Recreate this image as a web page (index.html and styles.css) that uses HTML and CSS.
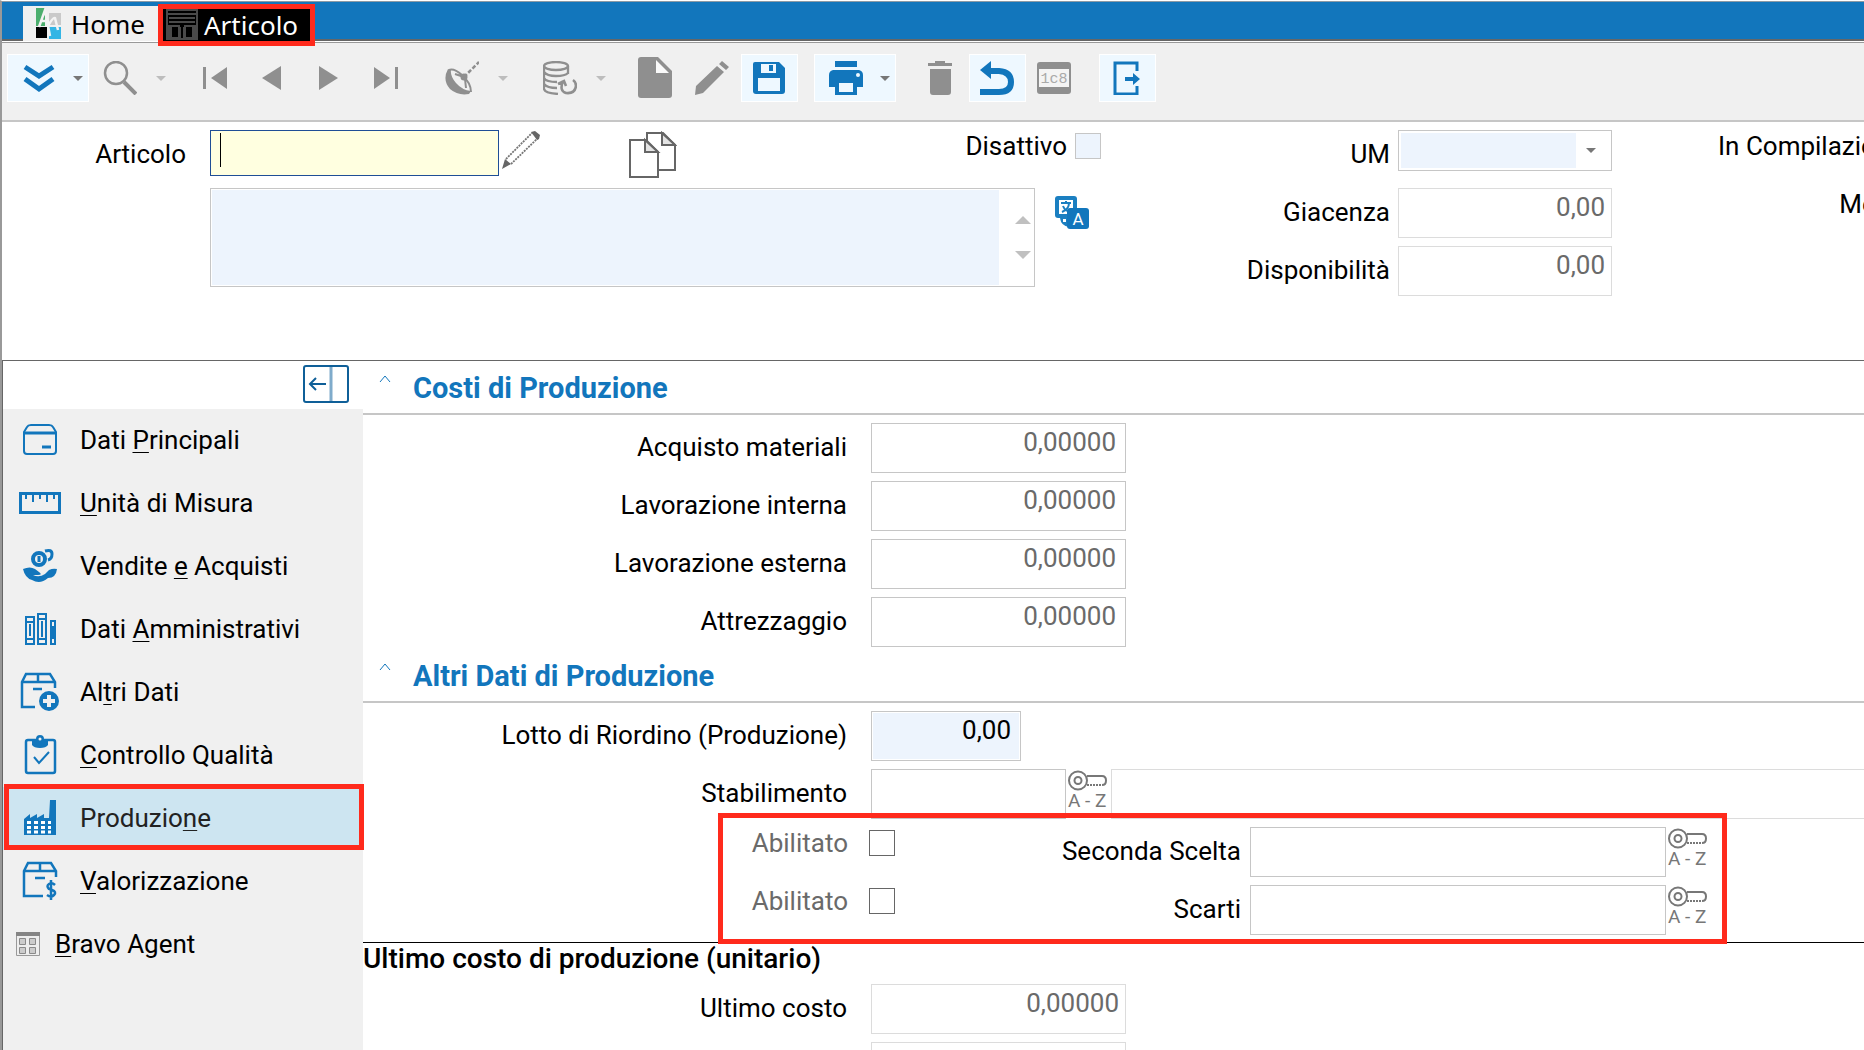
FILE: index.html
```html
<!DOCTYPE html>
<html lang="it">
<head>
<meta charset="utf-8">
<title>Articolo</title>
<link rel="stylesheet" href="styles.css">
</head>
<body>
<svg class="defs" aria-hidden="true">
  <symbol id="caret" viewBox="0 0 10 5"><path fill="currentColor" d="M0 0h10L5 5z"/></symbol>
  <symbol id="key" viewBox="0 0 39 21">
    <g fill="none" stroke="currentColor" stroke-width="2"><circle cx="10" cy="10.500" r="9"/><circle cx="10" cy="10.500" r="3.500"/><path d="M19 6h15q4 0 4 4.500T34 15"/><path stroke-dasharray="2 1" d="M19 15h15"/></g>
  </symbol>
</svg>
<div class="app">
  <header class="tabs">
    <a class="tab" href="#home">
      <svg class="tab-logo" viewBox="0 0 25 32"><path fill="#4cae6d" d="M0 0h9v18H0z"/><path fill="#c9c9c9" d="M13 5h12v12H13z"/><path d="M0 19h11v11H0z"/><path fill="#34b5e5" d="M13 19h12v12H13z"/><path fill="none" stroke="#f3f3f3" stroke-width="2.500" d="M3 19L9 2l5 26M12 18q5-9 7-8l3 12M5 13h8"/></svg>
      Home
    </a>
    <a class="tab tab-active" href="#articolo" aria-current="page">
      <svg class="tab-form" viewBox="0 0 32 32"><g fill="none" stroke="#4a4a4a" stroke-width="2"><path d="M1 1h30v29H1zM1 5h30M3 9h26M3 13h26M3 17h10v12H3zM19 17h10v12H19z"/></g><path fill="#4a4a4a" d="M2 17h4v12H2zM13 18h2v11h-2zM17 18h2v11h-2zM26 17h4v12h-4z"/></svg>
      Articolo
    </a>
  </header>

  <div class="toolbar" role="toolbar" aria-label="Comandi">
    <div class="tools">
      <button class="tool tool-wide tool-on" aria-label="Azioni"><svg class="i34" viewBox="0 0 34 34"><g fill="none" stroke="currentColor" stroke-width="5"><path d="M3 6l14 9 14-9M3 18l14 10 14-10"/></g></svg><svg class="caret"><use href="#caret"/></svg></button>
      <button class="tool tool-wide" aria-label="Cerca"><svg class="i34" viewBox="0 0 34 34"><g fill="none" stroke="currentColor"><circle cx="13" cy="12" r="11" stroke-width="2.500"/><path stroke-width="4" d="M21 21l12 12"/></g></svg><svg class="caret"><use href="#caret"/></svg></button>
    </div>
    <div class="tools">
      <button class="tool" aria-label="Primo"><svg class="i24" viewBox="0 0 24 24"><path fill="currentColor" d="M0 1h3v22H0zM24 1v22L8 12z"/></svg></button>
      <button class="tool" aria-label="Precedente"><svg class="i24" viewBox="0 0 24 24"><path fill="currentColor" d="M21 0v24L2 12z"/></svg></button>
      <button class="tool" aria-label="Successivo"><svg class="i24" viewBox="0 0 24 24"><path fill="currentColor" d="M2 0v24l19-12z"/></svg></button>
      <button class="tool" aria-label="Ultimo"><svg class="i24" viewBox="0 0 24 24"><path fill="currentColor" d="M21 1h3v22h-3zM0 1v22l16-11z"/></svg></button>
    </div>
    <div class="tools">
      <button class="tool tool-wide" aria-label="Ricezione"><svg class="i34" viewBox="0 0 34 34"><path fill="currentColor" d="M3 8q-6 11 2 20 8 7 19 5l2-3q-9-1-15-8T6 9z"/><path fill="none" stroke="currentColor" stroke-width="2" d="M4 9q5-2 13 5 9 8 9 17M10 13l9 3M20 18l1 9"/><circle cx="19" cy="16" r="3.500" fill="currentColor"/><path fill="none" stroke="currentColor" stroke-width="2.500" stroke-dasharray="4 2" d="M19 16L34 1"/></svg><svg class="caret"><use href="#caret"/></svg></button>
    </div>
    <div class="tools">
      <button class="tool tool-wide" aria-label="Aggiorna archivio"><svg class="i34" viewBox="0 0 34 34"><g fill="none" stroke="currentColor" stroke-width="2.300"><ellipse cx="13" cy="5" rx="12" ry="4"/><path d="M1 5v23q1 4 14 5M25 5v8M1 11q3 4 12 4t12-3M1 17q2 4 13 4M1 23q3 4 13 4"/><path stroke-width="2.600" d="M20 20q-4 10 3 12 9 1 10-7 0-4-3-6M15 23l6-3 2 5"/></g></svg><svg class="caret"><use href="#caret"/></svg></button>
    </div>
    <div class="tools">
      <button class="tool" aria-label="Nuovo"><svg class="i42" viewBox="0 0 42 42"><path fill="currentColor" d="M7 0h17l14 14v24q0 3-3 3H7q-3 0-3-3V3q0-3 3-3z"/><path fill="#fafafa" d="M22 3l13 13H22z"/></svg></button>
      <button class="tool" aria-label="Modifica"><svg class="i34" viewBox="0 0 34 34"><path fill="currentColor" d="M0 34l1-9L22 5l7 6L8 32zM24 3l3-3 7 6-3 3z"/></svg></button>
      <button class="tool tool-on" aria-label="Salva"><svg class="i34" viewBox="0 0 34 34"><path fill="currentColor" d="M3 1h24l6 6v23q0 3-3 3H4q-3 0-3-3V3q0-2 2-2z"/><path fill="#eef8ff" d="M9 3h15v9H9zM6 17h22v13H6z"/><path fill="currentColor" d="M17 4h4v6h-4z"/></svg></button>
    </div>
    <div class="tools">
      <button class="tool tool-wide tool-on" aria-label="Stampa"><svg class="i34" viewBox="0 0 34 34"><path fill="currentColor" d="M6 0h22v6H6zM4 9h26q4 1 4 5v12h-6v8H6v-8H0V14q0-4 4-5z"/><path fill="#eef8ff" d="M10 22h14v9H10z"/><circle cx="29" cy="14" r="2" fill="#eef8ff"/></svg><svg class="caret"><use href="#caret"/></svg></button>
    </div>
    <div class="tools">
      <button class="tool" aria-label="Elimina"><svg class="i34" viewBox="0 0 34 34"><path fill="currentColor" d="M12 0h10v2h7v3H5V2h7zM7 8h21v23q0 3-3 3H10q-3 0-3-3z"/></svg></button>
      <button class="tool tool-on" aria-label="Annulla"><svg class="i34" viewBox="0 0 34 34"><path fill="none" stroke="currentColor" stroke-width="6" d="M8 10h11q12 1 12 11T19 31H0"/><path fill="currentColor" d="M0 9L11 0v18z"/></svg></button>
      <button class="tool" aria-label="Log"><svg class="i34" viewBox="0 0 34 34"><rect y="1" width="34" height="32" rx="3" fill="currentColor"/><path fill="#f4f4f4" d="M2 8h30v18H2z"/><text class="log-text" x="17" y="22">1c8</text></svg></button>
    </div>
    <div class="tools">
      <button class="tool tool-on" aria-label="Esci"><svg class="i34" viewBox="0 0 34 34"><path fill="none" stroke="currentColor" stroke-width="3" d="M27 10V2H5v31h22v-8"/><path fill="currentColor" d="M15 16h8v-4l7 6-7 6v-4h-8z"/></svg></button>
    </div>
  </div>

  <form class="head">
    <div class="head-code">
      <label class="head-label" for="articolo">Articolo</label>
      <div class="code-line">
        <span class="code-box"><input class="code-input" id="articolo" type="text"></span>
        <button class="plain plain-edit" type="button" aria-label="Modifica codice"><svg class="i40" viewBox="0 0 40 40"><g fill="none" stroke="#777" stroke-width="1.800" stroke-dasharray="2 1"><path d="M5 29L31 3M10 34L37 8"/></g><path fill="#666" d="M1 39l3-10 6 5zM30 2l4-1 5 4-1 4-2 1z"/></svg></button>
        <button class="plain plain-copy" type="button" aria-label="Duplica"><svg class="i48" viewBox="0 0 48 48"><g fill="#fff" stroke="#666" stroke-width="2"><path d="M18 2h16l12 12v25H18z"/><path fill="#e4e4e4" d="M33 2v12h13z"/><path d="M1 9h16l12 12v25H1z"/><path fill="#e4e4e4" d="M16 9v12h13z"/></g></svg></button>
        <span class="off-field"><label for="disattivo">Disattivo</label><input class="off-box" id="disattivo" type="checkbox"></span>
      </div>
      <div class="desc-line">
        <div class="desc-box">
          <textarea class="desc" aria-label="Descrizione"></textarea>
          <span class="spin"><svg viewBox="0 0 16 8"><path d="M0 8h16L8 0z"/></svg><svg viewBox="0 0 16 8"><path d="M0 0h16L8 8z"/></svg></span>
        </div>
        <button class="plain" type="button" aria-label="Traduzioni"><svg class="i34" viewBox="0 0 34 34"><rect width="22" height="22" rx="3" fill="#1b7fc1"/><path fill="#fff" d="M4 4h14v14H4z"/><path fill="none" stroke="#1b7fc1" stroke-width="2" d="M6 7h10M11 5v2M7 16q7-3 7-9M8 10q2 5 7 6"/><path fill="#1b7fc1" d="M5 22q1 8 9 9v-9z"/><path fill="#fff" d="M8 23h3v3H8z"/><rect x="12" y="12" width="22" height="21" rx="3" fill="#1276bc"/><text class="tr-text" x="23" y="29">A</text></svg></button>
      </div>
    </div>
    <div class="head-stock">
      <label for="um">UM</label>
      <span class="um-box"><select class="um" id="um"><option></option></select><svg class="caret um-caret"><use href="#caret"/></svg></span>
      <label for="giacenza">Giacenza</label>
      <input class="field field-dim" id="giacenza" type="text" value="0,00" readonly>
      <label for="disponibilita">Disponibilità</label>
      <input class="field field-dim" id="disponibilita" type="text" value="0,00" readonly>
    </div>
    <div class="head-more">
      <label for="compilazione">In Compilazione</label><input id="compilazione" type="checkbox">
      <label for="mese">Mese</label><input id="mese" type="checkbox">
    </div>
  </form>

  <div class="body">
    <aside class="side">
      <div class="side-top"><button class="plain" aria-label="Comprimi menu"><svg class="i-toggle" viewBox="0 0 46 38"><g fill="none" stroke="#0f5f98"><rect x="1" y="1" width="44" height="36" rx="2" stroke-width="2"/><path stroke="#7fabcb" stroke-width="3" d="M28 2v34"/><path stroke-width="2" d="M23 19H8M13 13l-6 6 6 6"/></g></svg></button></div>
      <nav class="nav">
        <a class="nav-item" href="#principali"><svg class="i40" viewBox="0 0 40 40"><g fill="none" stroke="#1276bc" stroke-width="2"><path d="M4 12l3-5q1-2 4-2h18q3 0 4 2l3 5v19q0 3-3 3H7q-3 0-3-3z"/><path stroke-width="3" d="M4 13h32"/><path stroke-width="3" d="M22 27h9"/></g></svg><span>Dati <u>P</u>rincipali</span></a>
        <a class="nav-item" href="#misura"><svg class="i42" viewBox="0 0 42 40"><g fill="none" stroke="#1276bc"><path stroke-width="3" d="M1.500 10.500h39v19h-39z"/><path stroke-width="2" d="M7 12v4M14 12v7M21 12v4M28 12v7M35 12v4"/></g></svg><span><u>U</u>nità di Misura</span></a>
        <a class="nav-item" href="#vendite"><svg class="i40" viewBox="0 0 40 40"><g fill="none" stroke="#1276bc"><ellipse cx="19" cy="13" rx="6" ry="6" stroke-width="4"/><path stroke-width="3" d="M19 10v6M25 5q7-2 7 3t-4 6"/></g><path fill="#1276bc" d="M3 23q7-3 12 0l4 3q4 3-1 3h-5q6 3 12-1l4-4q4-2 8-1-1 9-9 9-8 7-16 2-7-2-9-11z"/></svg><span>Vendite <u>e</u> Acquisti</span></a>
        <a class="nav-item" href="#amministrativi"><svg class="i40" viewBox="0 0 40 40"><g fill="none" stroke="#1276bc" stroke-width="2"><path d="M6 8h8v27H6zM18 5h8v30h-8zM6 13h8M6 30h8M18 10h8M18 30h8M10 15v12M22 12v16"/><path d="M31 12h4v23h-4z"/></g><path fill="#1276bc" d="M30 17h6v13h-6z"/></svg><span>Dati <u>A</u>mministrativi</span></a>
        <a class="nav-item" href="#altri"><svg class="i40" viewBox="0 0 40 40"><g fill="none" stroke="#1276bc" stroke-width="2.500"><path d="M15 35H2V10l4-8h24l5 8v6M2 10h33M18 2v8M13 17h9"/></g><circle cx="29" cy="29" r="10" fill="#1276bc"/><path stroke="#f0f0f0" stroke-width="4" d="M29 23v12M23 29h12"/></svg><span>Al<u>t</u>ri Dati</span></a>
        <a class="nav-item" href="#qualita"><svg class="i40" viewBox="0 0 40 40"><g fill="none" stroke="#1276bc" stroke-width="2.500"><rect x="6" y="5" width="29" height="33" rx="2"/><path stroke-width="2" d="M14 22l5 6 10-11"/></g><path fill="#1276bc" d="M12 4h4q0-4 4-4t4 4h4v6q-2 3-8 3t-8-3z"/><circle cx="20" cy="4" r="1.500" fill="#f0f0f0"/></svg><span><u>C</u>ontrollo Qualità</span></a>
        <a class="nav-item nav-active" href="#produzione" aria-current="true"><svg class="i40" viewBox="0 0 40 40"><path fill="#1276bc" d="M4 37V21l6-5v4l7-4v4l7-4v4h5l1-18h6v35z"/><path stroke="#fff" stroke-width="3" stroke-dasharray="4 3" d="M7 24.500h24M7 29.500h24M7 34h24"/></svg><span>Produzio<u>n</u>e</span></a>
        <a class="nav-item" href="#valorizzazione"><svg class="i40" viewBox="0 0 40 40"><g fill="none" stroke="#1276bc" stroke-width="2.500"><path d="M23 35H4V10l4-8h23l5 8v6M4 10h32M20 2v8M15 17h10"/><path d="M35 24q-3-3-6-1t0 5l3 1q5 2 2 5t-7 0M31 19v20"/></g></svg><span><u>V</u>alorizzazione</span></a>
        <a class="nav-item nav-small" href="#agent"><svg class="i24" viewBox="0 0 24 24"><path fill="#eee" stroke="#999" d="M.5.500h23v23H.5z"/><path fill="#858585" d="M0 0h24v4H0z"/><g fill="#ccc" stroke="#8a8a8a"><path d="M3.500 6.500h6v6h-6zM13.500 6.500h6v6h-6zM3.500 15.500h6v6h-6zM13.500 15.500h6v6h-6z"/></g></svg><span><u>B</u>ravo Agent</span></a>
      </nav>
    </aside>

    <main class="main">
      <section>
        <h2 class="title"><svg class="chev" viewBox="0 0 12 8"><path d="M1 7l5-6 5 6"/></svg>Costi di Produzione</h2>
        <div class="rows">
          <div class="row"><label for="acq">Acquisto materiali</label><input class="field field-cost" id="acq" type="text" value="0,00000" readonly></div>
          <div class="row"><label for="lint">Lavorazione interna</label><input class="field field-cost" id="lint" type="text" value="0,00000" readonly></div>
          <div class="row"><label for="lest">Lavorazione esterna</label><input class="field field-cost" id="lest" type="text" value="0,00000" readonly></div>
          <div class="row"><label for="attr">Attrezzaggio</label><input class="field field-cost" id="attr" type="text" value="0,00000" readonly></div>
        </div>
      </section>
      <section>
        <h2 class="title"><svg class="chev" viewBox="0 0 12 8"><path d="M1 7l5-6 5 6"/></svg>Altri Dati di Produzione</h2>
        <div class="rows">
          <div class="row"><label for="lotto">Lotto di Riordino (Produzione)</label><input class="field field-lot" id="lotto" type="text" value="0,00"></div>
          <div class="row row-plant"><label for="stab">Stabilimento</label><input class="field" id="stab" type="text"><button class="lookup" aria-label="Cerca stabilimento"><svg><use href="#key"/></svg>A - Z</button><input class="field field-dim field-rest" type="text" aria-label="Descrizione stabilimento" readonly></div>
          <div class="marked">
            <div class="row row-pair"><label class="muted" for="ab1">Abilitato</label><input class="check" id="ab1" type="checkbox"><label class="near" for="seconda">Seconda Scelta</label><input class="field" id="seconda" type="text"><button class="lookup" aria-label="Cerca seconda scelta"><svg><use href="#key"/></svg>A - Z</button></div>
            <div class="row row-pair"><label class="muted" for="ab2">Abilitato</label><input class="check" id="ab2" type="checkbox"><label class="near" for="scarti">Scarti</label><input class="field" id="scarti" type="text"><button class="lookup" aria-label="Cerca scarti"><svg><use href="#key"/></svg>A - Z</button></div>
          </div>
        </div>
      </section>
      <section class="last">
        <h3 class="subtitle">Ultimo costo di produzione (unitario)</h3>
        <div class="last-rows">
          <div class="row"><label for="ult">Ultimo costo</label><input class="field field-dim field-last" id="ult" type="text" value="0,00000" readonly></div>
          <div class="row"><span></span><input class="field field-dim field-last" type="text" aria-label="Costo" readonly></div>
        </div>
      </section>
    </main>
  </div>
</div>
</body>
</html>
```
FILE: styles.css
```css
* { box-sizing: border-box; }

body {
  margin: 0;
  font: 26px/48px Roboto, "Liberation Sans", sans-serif;
  color: #000;
  background: #fff;
}

button, input, select, textarea { font: inherit; margin: 0; border-radius: 0; }
button { padding: 0; border: 0; background: none; }
label { white-space: nowrap; }
svg { display: block; flex: none; }
.defs { position: absolute; width: 0; height: 0; }

.app {
  height: 100vh;
  overflow: hidden;
  display: flex;
  flex-direction: column;
  border-left: 2px solid #999;
  border-top: 1px solid #fff;
}

/* Tabs */
.tabs {
  display: flex;
  flex: none;
  height: 40px;
  padding: 2px 0 0 21px;
  border-top: 1px solid #8c9aa5;
  border-bottom: 2px solid #666;
  background: #1276bc;
}
.tab {
  display: flex;
  align-items: center;
  gap: 10px;
  height: 35px;
  margin-top: 2px;
  padding: 0 13px;
  background: #f0f0f0;
  color: #000;
  font: 26px/32px "Noto Sans", "Open Sans", sans-serif;
  text-decoration: none;
}
.tab-active {
  position: relative;
  gap: 6px;
  height: 42px;
  margin-top: 0;
  padding: 0 12px 0 3px;
  border: 5px solid #ff2a1c;
  background: #000;
  color: #fff;
}
.tab-logo { width: 25px; height: 32px; }
.tab-form { width: 32px; height: 32px; }

/* Toolbar */
.toolbar {
  display: flex;
  flex: none;
  align-items: flex-start;
  gap: 16px;
  height: 80px;
  margin-top: 1px;
  padding: 11px 5px 0;
  border-top: 1px solid #999;
  border-bottom: 2px solid #c6c6c6;
  background: #f0f0f0;
}
.tools { display: flex; }
.tool {
  display: flex;
  align-items: center;
  justify-content: center;
  width: 57px;
  height: 48px;
  padding-right: 2px;
  color: #8f8f8f;
}
.tool-wide { width: 82px; justify-content: space-between; padding: 0 5px 0 14px; }
.tool-on { color: #1276bc; background: #eef8ff; border: 1px solid #fff; }
.caret { width: 10px; height: 5px; color: #bdbdbd; }
.tool-on .caret { color: #777; }
.i24 { width: 24px; height: 24px; }
.i34 { width: 34px; height: 34px; }
.i40 { width: 40px; height: 40px; }
.i42 { width: 42px; height: 42px; }
.i48 { width: 48px; height: 48px; }
.log-text { font: 15px "Liberation Mono", monospace; fill: #aaa; text-anchor: middle; }
.tr-text { font: 17px Roboto, sans-serif; fill: #fff; text-anchor: middle; }

/* Item header */
.head { display: flex; flex: none; height: 238px; padding-top: 8px; }
.head-code {
  display: grid;
  flex: none;
  grid-template-columns: 184px 891px;
  grid-template-rows: 58px 99px;
  column-gap: 24px;
}
.head-label { text-align: right; }
.code-line { display: flex; align-items: flex-start; }
.code-box {
  display: flex;
  width: 289px;
  height: 46px;
  padding: 2px 9px 8px;
  border: 1px solid #1f4e96;
  background: #ffffe0;
}
.code-input { width: 100%; padding: 0; border: 0; outline: 0; border-left: 1px solid #000; background: none; }
.plain-edit { padding-left: 2px; }
.plain-copy { margin-left: 88px; padding-top: 1px; }
.off-field { display: flex; align-items: flex-start; gap: 8px; margin-left: auto; line-height: 32px; }
.off-box {
  appearance: none;
  width: 26px;
  height: 26px;
  margin-top: 3px;
  border: 1px solid #c6c6c6;
  background: #edf4fd;
}
.desc-line { grid-column: 2; display: flex; align-items: flex-start; gap: 20px; padding-right: 12px; }
.desc-line .plain { margin-top: 8px; }
.desc-box { display: flex; flex: 1; height: 99px; padding: 1px; border: 1px solid #c6c6c6; }
.desc { flex: 1; border: 0; resize: none; background: #edf4fd; }
.spin { display: grid; align-content: center; gap: 27px; padding: 0 2px 0 16px; }
.spin svg { width: 16px; height: 8px; fill: #c0c0c0; }

.head-stock {
  display: grid;
  flex: none;
  grid-template-columns: 289px 214px;
  grid-template-rows: 50px 50px 50px;
  gap: 8px;
  align-content: start;
  text-align: right;
}
.um-box { position: relative; height: 41px; padding: 2px; border: 1px solid #c6c6c6; }
.um {
  appearance: none;
  display: block;
  width: 175px;
  height: 35px;
  border: 0;
  background: #edf4fd;
}
.um-caret { position: absolute; right: 15px; top: 17px; color: #777; }

.head-more {
  display: grid;
  grid-template-columns: 185px 26px;
  grid-auto-rows: 58px;
  gap: 0 9px;
  margin-left: 106px;
  line-height: 32px;
  text-align: right;
}

/* Fields */
.field {
  width: 100%;
  height: 50px;
  padding: 0 8px 12px;
  border: 1px solid #c6c6c6;
  background: #fff;
  text-align: right;
}
.field[readonly] { color: #6a6a6a; }
.field-dim { padding-right: 6px; border-color: #dcdcdc; }
.field-cost { width: 255px; padding-right: 9px; }
.field-last { width: 255px; }
.field-lot { width: 150px; padding-right: 9px; background: #edf4fd; box-shadow: inset 0 0 0 1px #fff; }

/* Lower part */
.body { display: flex; flex: 1; min-height: 0; border-top: 1px solid #666; border-left: 1px solid #666; }
.side { display: flex; flex-direction: column; flex: none; width: 360px; }
.side-top { display: flex; justify-content: flex-end; padding: 4px 14px 6px 0; }
.i-toggle { width: 46px; height: 38px; }
.nav { flex: 1; background: #f0f0f0; }
.nav-item {
  position: relative;
  display: grid;
  grid-template-columns: 42px 1fr;
  align-items: center;
  justify-items: center;
  gap: 19px;
  height: 63px;
  padding: 0 0 2px 16px;
  color: #000;
  text-decoration: none;
}
.nav-item span { justify-self: start; }
.nav-item u { text-decoration-thickness: 1px; text-underline-offset: 3px; }
.nav-small { grid-template-columns: 24px 1fr; gap: 15px; padding-left: 13px; }
.nav-active { background: #cde5f1; color: #222; }
.nav-active::after { content: ""; position: absolute; inset: -3px -1px 0 1px; border: 5px solid #ff2a1c; }

.main { flex: 1; min-width: 0; overflow: hidden; }
.title {
  display: flex;
  align-items: center;
  gap: 22px;
  height: 54px;
  margin: 0;
  padding: 2px 0 0 16px;
  border-bottom: 2px solid #c6c6c6;
  color: #1276bc;
  font-size: 29px;
  font-weight: 700;
}
.chev { width: 12px; height: 8px; margin-bottom: 18px; fill: none; stroke: #1276bc; }
.rows { display: grid; gap: 8px; padding: 8px 0 2px; }
.row { display: grid; grid-template-columns: 508px 1fr; height: 50px; }
.row label { padding-right: 24px; text-align: right; }
.row-plant { grid-template-columns: 508px 195px 45px 1fr; }
.field-rest { border-right: 0; }
.lookup {
  height: 42px;
  padding-left: 2px;
  color: #777;
  font-size: 19px;
  line-height: 20px;
  text-align: left;
  white-space: nowrap;
}
.lookup svg { width: 39px; height: 21px; }

.marked { position: relative; display: grid; gap: 8px; width: 1364px; }
.marked::after { content: ""; position: absolute; inset: -14px 0 -9px 355px; border: 5px solid #ff2a1c; pointer-events: none; }
.row-pair { grid-template-columns: 506px 26px 355px 416px 45px; }
.row .muted { padding-right: 21px; color: #6a6a6a; line-height: 32px; }
.row .near { padding-right: 9px; }
.check { appearance: none; width: 26px; height: 26px; margin-top: 3px; border: 1px solid #666; background: #fff; }

.last { margin-top: 5px; border-top: 1px solid #000; }
.last-rows { display: grid; gap: 8px; }
.subtitle { height: 41px; margin: 0; font-size: 28px; font-weight: 500; line-height: 32px; }
```
